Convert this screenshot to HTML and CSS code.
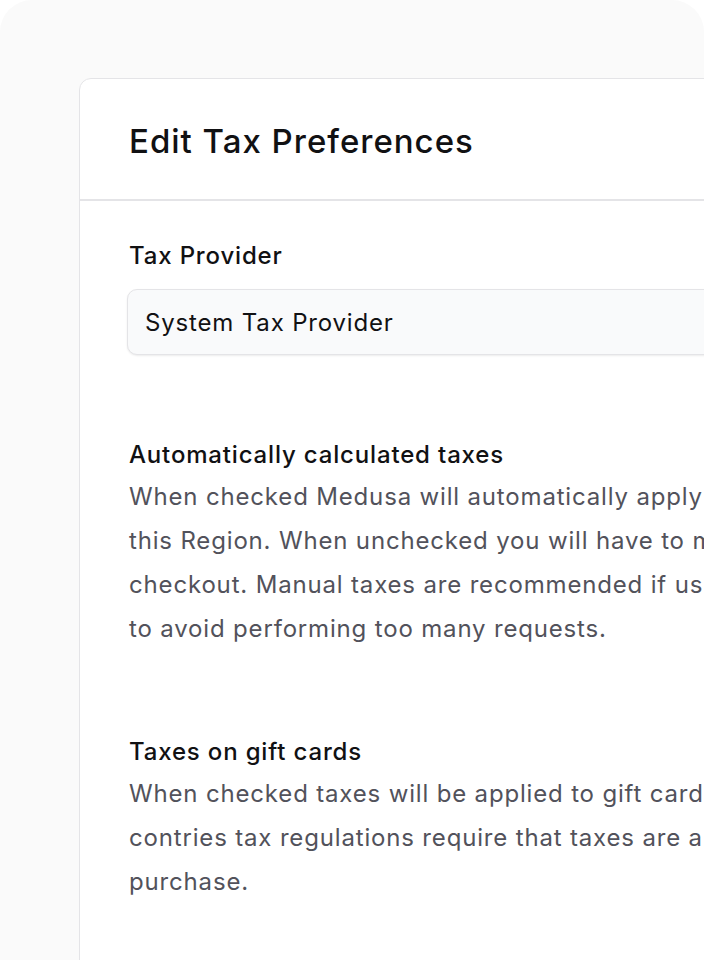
FILE: index.html
```html
<!DOCTYPE html>
<html lang="en">
<head>
<meta charset="utf-8">
<title>Edit Tax Preferences</title>
<link rel="stylesheet" href="styles.css">
</head>
<body>
<div class="frame">
  <section class="card">
    <header class="card-header">
      <h1 class="title">Edit Tax Preferences</h1>
    </header>
    <div class="card-body">
      <div class="field">
        <label class="label">Tax Provider</label>
        <div class="select">System Tax Provider</div>
      </div>
      <div class="option">
        <h2 class="option-title">Automatically calculated taxes</h2>
        <p class="option-desc">When checked Medusa will automatically apply tax calculations to Carts in<br>this Region. When unchecked you will have to manually compute taxes at<br>checkout. Manual taxes are recommended if using a 3rd party tax provider<br>to avoid performing too many requests.</p>
      </div>
      <div class="option option-second">
        <h2 class="option-title">Taxes on gift cards</h2>
        <p class="option-desc">When checked taxes will be applied to gift cards on checkout. In some<br>contries tax regulations require that taxes are applied to gift cards on<br>purchase.</p>
      </div>
    </div>
  </section>
</div>
</body>
</html>
```
FILE: styles.css
```css
* { box-sizing: border-box; }
html, body { margin: 0; padding: 0; background: #ffffff; }
body {
  font-family: Inter, "Noto Sans", sans-serif;
  letter-spacing: 0.052em;
  width: 704px;
  height: 960px;
  overflow: hidden;
}
.frame {
  height: 960px;
  background: #fafafa;
  border-radius: 32px 32px 0 0;
  padding: 78px 0 0 79px;
  overflow: hidden;
}
.card {
  width: 1200px;
  height: 900px;
  background: #ffffff;
  border: 1px solid #e4e4e7;
  border-radius: 12px 0 0 0;
}
.card-header {
  height: 122px;
  border-bottom: 2px solid #e4e4e7;
  display: flex;
  align-items: center;
  padding-left: 49px;
  padding-top: 3px;
}
.title {
  margin: 0;
  font-size: 33px;
  font-weight: 500;
  letter-spacing: 0.03em;
  color: #111113;
}
.card-body {
  padding: 38px 0 0 47px;
}
.field {
  display: flex;
  flex-direction: column;
  gap: 16px;
}
.label {
  font-size: 24px;
  font-weight: 500;
  color: #111113;
  line-height: 34px;
  padding-left: 2px;
}
.select {
  width: 1000px;
  height: 66px;
  background: #f9fafb;
  border: 1px solid #e4e4e7;
  border-radius: 10px;
  box-shadow: 0 1px 2px rgba(0,0,0,0.08);
  display: flex;
  align-items: center;
  padding-left: 17px;
  font-size: 24px;
  color: #111113;
}
.option {
  margin-top: 80px;
  padding-left: 2px;
  white-space: nowrap;
}
.option-second { margin-top: 81px; }
.option-title {
  margin: 0;
  font-size: 24px;
  font-weight: 500;
  line-height: 40px;
  color: #111113;
}
.option-desc {
  margin: 0;
  font-size: 24px;
  line-height: 44px;
  color: #52525b;
}
```
